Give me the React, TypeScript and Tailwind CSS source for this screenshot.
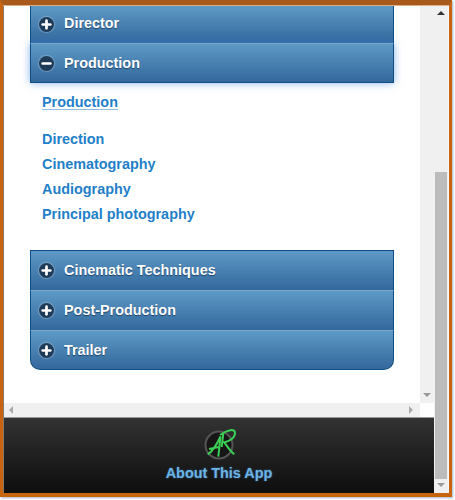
import { Minus, Plus } from "lucide-react";

const font = { fontFamily: '"Liberation Sans", Arial, sans-serif' };

function Header({
  label,
  open,
  rounded,
  first,
  dark,
}: {
  label: string;
  open?: boolean;
  rounded?: boolean;
  first?: boolean;
  dark?: boolean;
}) {
  return (
    <div
      className={`flex items-center gap-[10px] border-x border-t border-x-[#0f4e84] bg-gradient-to-b from-[#5e9ac6] to-[#33689c] pl-[8px] ${
        first ? "h-[37px] border-t-0 pb-[1px]" : "h-10"
      } ${dark ? "border-t-[#0f4e84]" : "border-t-[#7ea6c6]"} ${
        open ? "relative border-b border-b-[#0f4e84] pt-[1px] shadow-[0_0_8px_rgba(60,130,220,0.6)]" : ""
      } ${rounded ? "rounded-b-[10px] border-b border-b-[#0f4e84] pt-[1px]" : ""}`}
    >
      <span className="flex h-[15px] w-[15px] items-center justify-center rounded-full bg-[#1d3a58] text-white shadow-[0_0_1px_1px_rgba(255,255,255,0.25)]">
        {open ? <Minus size={13} strokeWidth={5} /> : <Plus size={13} strokeWidth={5} />}
      </span>
      <span className="text-[14.4px] font-bold text-white [text-shadow:0_1px_1px_#1d4468]">{label}</span>
    </div>
  );
}

function Arrow({ dir, cls }: { dir: "up" | "down" | "left" | "right"; cls: string }) {
  const shape = {
    up: "border-x-[4px] border-b-[4px] border-x-transparent",
    down: "border-x-[4px] border-t-[4px] border-x-transparent",
    left: "border-y-[4px] border-r-[4px] border-y-transparent",
    right: "border-y-[4px] border-l-[4px] border-y-transparent",
  }[dir];
  return <span className={`h-0 w-0 ${shape} ${cls}`} />;
}

export default function App() {
  const links = ["Direction", "Cinematography", "Audiography", "Principal photography"];
  return (
    <div style={font} className="h-[500px] w-[455px] overflow-hidden bg-white">
      <div className="flex h-[497px] w-[452px] flex-col border-x-[3px] border-b-[4px] border-t-[5px] border-[#c8640f] border-t-[#a85a1c] shadow-[1px_1px_2px_rgba(100,130,170,0.6)]">
        <div className="h-px shrink-0 bg-[#dcae84]" />
        <div className="flex min-h-0 flex-1 border-l border-[#8a7a6c]">
          {/* left side: inner page and its footer */}
          <div className="flex w-[430px] flex-col">
            <div className="flex h-[397px] shrink-0">
              <div className="w-[416px] overflow-hidden bg-white pl-[26px] pr-[26px]">
                <Header label="Director" first />
                <Header label="Production" open />
                <div className="pl-3 pt-[12px] text-[14.4px] font-bold text-[#1f7fc8]">
                  <div className="h-[15px] w-fit border-b border-[#8dbde6] leading-[15px]">Production</div>
                  <div className="mt-[17px] flex flex-col">
                    {links.map((l) => (
                      <div key={l} className="h-[25px] leading-[25px]">
                        {l}
                      </div>
                    ))}
                  </div>
                </div>
                <div className="mt-[23px]">
                  <Header label="Cinematic Techniques" dark />
                  <Header label="Post-Production" />
                  <Header label="Trailer" rounded />
                </div>
              </div>
              <div className="flex w-[14px] flex-col items-center justify-end bg-[#f0f0f0] pb-[6px]">
                <Arrow dir="down" cls="border-t-[#999999]" />
              </div>
            </div>
            <div className="flex h-[14px] shrink-0">
              <div className="flex w-[416px] items-center justify-between bg-[#f0f0f0] pl-[5px] pr-[7px]">
                <Arrow dir="left" cls="border-r-[#aaaaaa]" />
                <Arrow dir="right" cls="border-l-[#aaaaaa]" />
              </div>
              <div className="w-[14px] bg-white" />
            </div>
            <div className="flex flex-1 flex-col items-center border-t border-[#9a9a9a] bg-gradient-to-b from-[#333333] to-[#0e0e0e] pt-[11px]">
              <svg width="32" height="32" viewBox="0 0 32 32" className="overflow-visible">
                <circle cx="16" cy="16" r="13.5" fill="#161616" stroke="#555555" strokeWidth="2" />
                <path
                  d="M4.7 25.3 C9 23 14 15 17.5 7.5 L15.3 27.7 M6 20 C10 19 14 18.5 17 17.7"
                  fill="none"
                  stroke="#3ccf55"
                  strokeWidth="2"
                />
                <path
                  d="M20.3 4.3 L18.7 18 M17 6 C24 1 32 -1 32 4 C32 9 26 12.5 21.3 13.3 C24 17 27 22 31.3 25.3"
                  fill="none"
                  stroke="#3ccf55"
                  strokeWidth="2"
                />
              </svg>
              <div className="mt-[2px] text-[14.4px] font-bold text-[#6cb4e8] [text-shadow:0_0_2px_#3a6a90]">
                About This App
              </div>
            </div>
          </div>
          {/* outer scrollbar */}
          <div className="flex flex-1 flex-col items-center border-r border-[#f8f8f8] bg-[#f0f0f0]">
            <div className="flex h-[166px] w-full shrink-0 justify-center pt-[5px]">
              <Arrow dir="up" cls="border-b-[#333333]" />
            </div>
            <div className="h-[307px] w-[12px] shrink-0 bg-[#bcbcbc]" />
            <div className="mt-[4px] flex">
              <Arrow dir="down" cls="border-t-[#999999]" />
            </div>
          </div>
        </div>
      </div>
    </div>
  );
}
